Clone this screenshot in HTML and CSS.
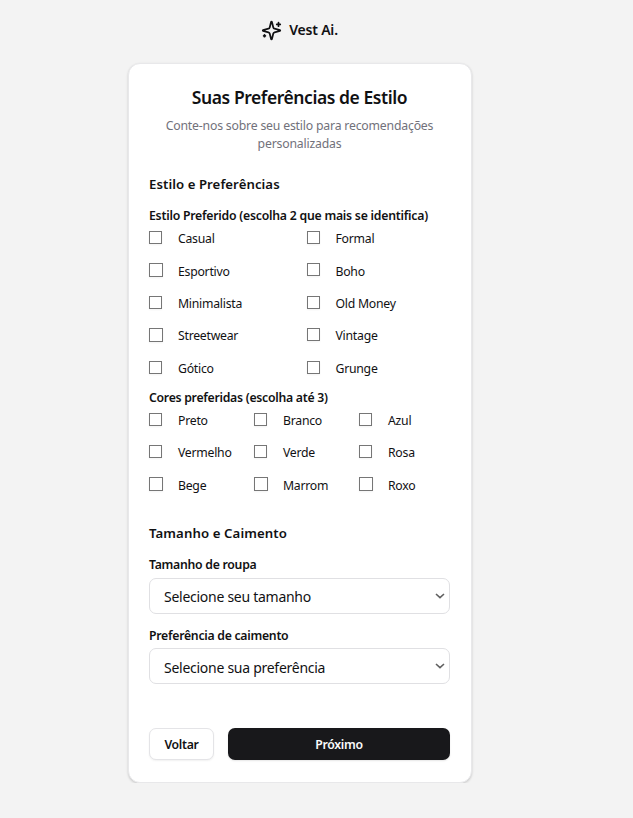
FILE: index.html
```html
<!DOCTYPE html>
<html lang="pt-BR">
<head>
<meta charset="utf-8">
<title>Vest Ai.</title>
<link rel="stylesheet" href="styles.css">
</head>
<body>
<main class="page">
  <header class="brand">
    <svg class="logo" viewBox="0 0 24 24" fill="none" stroke="currentColor" stroke-width="2" stroke-linecap="round" stroke-linejoin="round"><path d="M9.937 15.5A2 2 0 0 0 8.5 14.063l-6.135-1.582a.5.5 0 0 1 0-.962L8.5 9.936A2 2 0 0 0 9.937 8.5l1.582-6.135a.5.5 0 0 1 .963 0L14.063 8.5A2 2 0 0 0 15.5 9.937l6.135 1.581a.5.5 0 0 1 0 .964L15.5 14.063a2 2 0 0 0-1.437 1.437l-1.582 6.135a.5.5 0 0 1-.963 0z"/><path d="M20 3v4M22 5h-4M4 17v2M5 18H3"/></svg>
    <span class="brand-name">Vest Ai.</span>
  </header>
  <form class="card">
    <h1>Suas Preferências de Estilo</h1>
    <p class="intro">Conte-nos sobre seu estilo para recomendações<br>personalizadas</p>

    <h2 class="section-style">Estilo e Preferências</h2>
    <h3 class="label-style">Estilo Preferido (escolha 2 que mais se identifica)</h3>
    <div class="options two">
      <label><input type="checkbox"><span>Casual</span></label>
      <label><input type="checkbox"><span>Formal</span></label>
      <label><input type="checkbox" class="wide"><span class="low">Esportivo</span></label>
      <label><input type="checkbox"><span class="low">Boho</span></label>
      <label><input type="checkbox"><span>Minimalista</span></label>
      <label><input type="checkbox"><span>Old Money</span></label>
      <label><input type="checkbox" class="wide"><span>Streetwear</span></label>
      <label><input type="checkbox"><span>Vintage</span></label>
      <label><input type="checkbox"><span>Gótico</span></label>
      <label><input type="checkbox"><span>Grunge</span></label>
    </div>
    <h3 class="label-colors">Cores preferidas (escolha até 3)</h3>
    <div class="options three">
      <label><input type="checkbox"><span>Preto</span></label>
      <label><input type="checkbox"><span>Branco</span></label>
      <label><input type="checkbox"><span>Azul</span></label>
      <label><input type="checkbox"><span>Vermelho</span></label>
      <label><input type="checkbox"><span>Verde</span></label>
      <label><input type="checkbox"><span>Rosa</span></label>
      <label><input type="checkbox" class="wide"><span class="low">Bege</span></label>
      <label><input type="checkbox" class="wide"><span class="low">Marrom</span></label>
      <label><input type="checkbox" class="wide"><span class="low">Roxo</span></label>
    </div>

    <h2 class="section-size">Tamanho e Caimento</h2>
    <h3 class="label-size">Tamanho de roupa</h3>
    <div class="select"><span>Selecione seu tamanho</span><svg class="chevron" viewBox="0 0 10 6"><path d="M1 1l4 3.6L9 1"/></svg></div>
    <h3 class="label-fit">Preferência de caimento</h3>
    <div class="select select-fit"><span>Selecione sua preferência</span><svg class="chevron" viewBox="0 0 10 6"><path d="M1 1l4 3.6L9 1"/></svg></div>

    <div class="actions">
      <button type="button" class="back">Voltar</button>
      <button type="button" class="next">Próximo</button>
    </div>
  </form>
</main>
</body>
</html>
```
FILE: styles.css
```css
* { box-sizing: border-box; }
body {
  margin: 0;
  background: #f3f3f3;
  color: #111113;
  font-family: "Noto Sans", "Open Sans", sans-serif;
  font-size: 12.25px;
}
h1, h2, h3, p { margin: 0; white-space: nowrap; }
.page { width: 344px; margin-left: 127.5px; padding-top: 19px; }
.brand { display: flex; align-items: center; justify-content: center; gap: 7px; height: 22px; }
.logo { width: 21px; height: 21px; }
.brand-name { margin-top: -1px; font-size: 14px; font-weight: 600; letter-spacing: -0.2px; }
.card {
  height: 720px;
  margin-top: 22px;
  padding: 20.5px 20.5px 0;
  background: #fff;
  border: 1px solid #e8e8ea;
  border-radius: 12px;
  box-shadow: 0 1px 3px rgba(0, 0, 0, .1), 0 1px 2px rgba(0, 0, 0, .08);
}
h1 { height: 24px; line-height: 24px; font-size: 17.5px; font-weight: 600; text-align: center; letter-spacing: -0.43px; }
.intro { margin-top: 8px; line-height: 18px; color: #71717a; text-align: center; letter-spacing: -0.19px; }
h2 { height: 20px; line-height: 20px; font-size: 13.2px; font-weight: 600; letter-spacing: 0.06px; }
h3 { height: 16px; line-height: 16px; font-size: 12.25px; font-weight: 600; letter-spacing: -0.27px; }
.section-style { margin-top: 21px; }
.label-style { margin-top: 14.5px; letter-spacing: -0.23px; }
.options { display: grid; grid-auto-rows: 32.4px; column-gap: 14px; }
.two { grid-template-columns: 1fr 1fr; margin-top: 7px; height: 158.5px; }
.three { grid-template-columns: repeat(3, 1fr); margin-top: 7.2px; height: 112px; }
.options label { display: flex; align-items: flex-start; line-height: 16px; letter-spacing: -0.25px; white-space: nowrap; }
.options .low { padding-top: 1px; }
.options input {
  appearance: none;
  flex: none;
  width: 13px;
  height: 13px;
  margin: 0 16px 0 0;
  border: 1px solid #767676;
  background: #fff;
  box-shadow: 0 1px 2px rgba(0, 0, 0, .05);
}
.options input.wide { width: 14px; height: 14px; margin-right: 15px; }
.section-size { margin-top: -1.6px; letter-spacing: 0.1px; }
.label-size { margin-top: 14px; }
.select {
  display: flex;
  align-items: center;
  justify-content: space-between;
  height: 36px;
  margin-top: 5px;
  padding: 0 4px 0 14px;
  border: 1px solid #e0e0e3;
  border-radius: 7px;
  font-size: 14px;
  letter-spacing: -0.27px;
}
.select span { padding-top: 1px; }
.select-fit { margin-top: 4px; }
.select-fit span { padding-top: 2px; }
.chevron { width: 10px; height: 6px; fill: none; stroke: #606060; stroke-width: 1.6; }
.label-fit { margin-top: 14px; }
.actions { display: flex; gap: 14px; margin-top: 44px; }
.actions button {
  height: 32px;
  padding: 0;
  border-radius: 7px;
  font: 600 12.25px "Noto Sans", "Open Sans", sans-serif;
  letter-spacing: -0.3px;
}
.back { width: 65px; border: 1px solid #e4e4e7; background: #fff; color: #111113; box-shadow: 0 1px 2px rgba(0, 0, 0, .06); }
.next { flex: 1; border: 0; background: #18181b; color: #fafafa; box-shadow: 0 1px 2px rgba(0, 0, 0, .1); }
```
